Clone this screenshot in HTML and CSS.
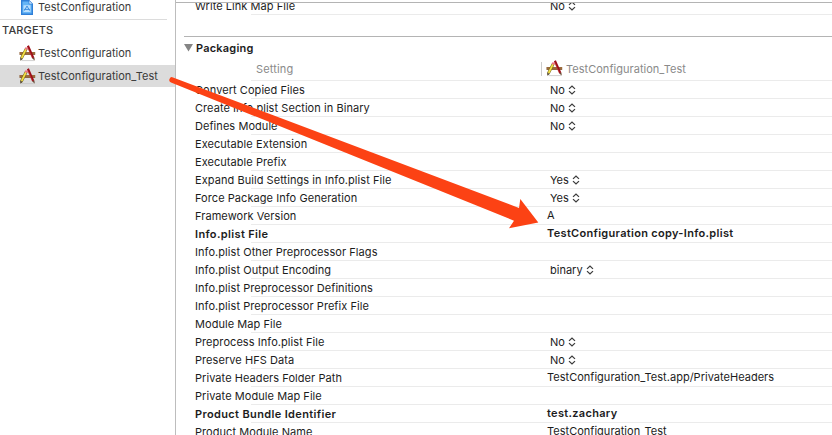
FILE: index.html
```html
<!DOCTYPE html>
<html lang="en">
<head>
<meta charset="utf-8">
<title>Build Settings</title>
<link rel="stylesheet" href="styles.css">
</head>
<body>
<svg class="defs" width="0" height="0" aria-hidden="true">
  <symbol id="app" viewBox="0 0 17 17">
    <path d="M2.5 15.6H15" stroke="#c4c4c4" stroke-width=".8"/>
    <path d="M.5 7H16.2V9.9H.5z" fill="#86562d"/>
    <path d="M1 8H16" stroke="#bd8b52" stroke-width=".8"/>
    <path d="M7.3 3.6L2.4 13.4" stroke="#6b5d14" stroke-width="2.8"/>
    <path d="M7.1 4L2.6 13" stroke="#f3df45" stroke-width="1.7"/>
    <path d="M7.8 2.6L6.9 4.5" stroke="#ed7184" stroke-width="2.6"/>
    <path d="M1.2 12.7L3.6 13.9L1.4 15.8z" fill="#4a3c20"/>
    <path d="M8.9.8L14.3 13" stroke="#9b0d18" stroke-width="2.2"/>
    <path d="M8.5 2L13.2 12.7" stroke="#d44b43" stroke-width=".5"/>
    <path d="M13.2 13.3L15.4 12.4L15.8 15.8z" fill="#6b4b35"/>
  </symbol>
  <symbol id="updown" viewBox="0 0 8 10">
    <path d="M1 3.9L4 1L7 3.9M1 6.1L4 9L7 6.1" fill="none" stroke="#3c3c3c" stroke-width="1.25"/>
  </symbol>
</svg>
<div class="window">
  <aside class="sidebar">
    <div class="item project">
      <svg class="doc" width="12" height="15" viewBox="0 0 12 15"><path d="M.7.7H8L11.3 4V14.3H.7z" fill="#65b5f6" stroke="#2f7fd8" stroke-width="1.4"/><path d="M8 .7V4H11.3" fill="#e4f3ff" stroke="#2f7fd8" stroke-width=".7"/><path d="M2.5 5.2H9.5V12H2.5z" fill="#b9dfff"/><path d="M3.4 10.6L6 6L8.6 10.6M3 9.4H9" fill="none" stroke="#3f8fe0" stroke-width="1"/></svg>
      <span>TestConfiguration</span>
    </div>
    <h2 class="heading">TARGETS</h2>
    <div class="item"><svg class="app"><use href="#app"/></svg><span>TestConfiguration</span></div>
    <div class="item selected"><svg class="app"><use href="#app"/></svg><span>TestConfiguration_Test</span></div>
  </aside>
  <main class="settings">
    <div class="row first"><span class="label">Write Link Map File</span><span class="popup">No<svg><use href="#updown"/></svg></span></div>
    <section class="group">
      <h3 class="title"><svg width="9" height="8" viewBox="0 0 9 8"><path d="M0 0H9L4.5 7.5z" fill="#858585"/></svg>Packaging</h3>
      <div class="columns"><span class="setting">Setting</span><span class="target"><svg class="app"><use href="#app"/></svg>TestConfiguration_Test</span></div>
      <div class="row"><span class="label">Convert Copied Files</span><span class="popup">No<svg><use href="#updown"/></svg></span></div>
      <div class="row"><span class="label">Create Info.plist Section in Binary</span><span class="popup">No<svg><use href="#updown"/></svg></span></div>
      <div class="row"><span class="label">Defines Module</span><span class="popup">No<svg><use href="#updown"/></svg></span></div>
      <div class="row"><span class="label">Executable Extension</span></div>
      <div class="row"><span class="label">Executable Prefix</span></div>
      <div class="row"><span class="label">Expand Build Settings in Info.plist File</span><span class="popup">Yes<svg><use href="#updown"/></svg></span></div>
      <div class="row"><span class="label">Force Package Info Generation</span><span class="popup">Yes<svg><use href="#updown"/></svg></span></div>
      <div class="row"><span class="label">Framework Version</span><span class="value">A</span></div>
      <div class="row bold"><span class="label">Info.plist File</span><span class="value">TestConfiguration copy-Info.plist</span></div>
      <div class="row"><span class="label">Info.plist Other Preprocessor Flags</span></div>
      <div class="row"><span class="label">Info.plist Output Encoding</span><span class="popup">binary<svg><use href="#updown"/></svg></span></div>
      <div class="row"><span class="label">Info.plist Preprocessor Definitions</span></div>
      <div class="row"><span class="label">Info.plist Preprocessor Prefix File</span></div>
      <div class="row"><span class="label">Module Map File</span></div>
      <div class="row"><span class="label">Preprocess Info.plist File</span><span class="popup">No<svg><use href="#updown"/></svg></span></div>
      <div class="row"><span class="label">Preserve HFS Data</span><span class="popup">No<svg><use href="#updown"/></svg></span></div>
      <div class="row"><span class="label">Private Headers Folder Path</span><span class="value">TestConfiguration_Test.app/PrivateHeaders</span></div>
      <div class="row"><span class="label">Private Module Map File</span></div>
      <div class="row bold"><span class="label">Product Bundle Identifier</span><span class="value">test.zachary</span></div>
      <div class="row"><span class="label">Product Module Name</span><span class="value">TestConfiguration_Test</span></div>
    </section>
  </main>
  <svg class="arrow" width="832" height="435" viewBox="0 0 832 435"><path d="M173 77.4L519 208L520.3 199L538.3 222.5L509 228.3L514 220.7L171 82.4A2.6 2.6 0 0 1 173 77.4z" fill="#fc4214"/></svg>
</div>
</body>
</html>
```

FILE: styles.css
```css
* { box-sizing: border-box; }
body {
  margin: 0;
  background: #fff;
  color: #1c1c1c;
  font: 11px/18px Inter, "Liberation Sans", sans-serif;
}
.defs { display: block; height: 0; }
.window {
  position: relative;
  display: flex;
  width: 832px;
  height: 435px;
  overflow: hidden;
}
.sidebar {
  flex: none;
  width: 176px;
  border-right: 1px solid #bdbdbd;
  letter-spacing: .03px;
  color: #3a3a3a;
}
.item {
  display: flex;
  align-items: center;
  height: 22px;
  padding-left: 19px;
  margin-bottom: 1px;
}
.item.selected { background: #dcdcdc; }
.app { flex: none; width: 17px; height: 17px; margin-right: 2px; }
.item.project {
  height: 20px;
  width: 167px;
  margin: 0;
  padding: 0 0 5px 21px;
  border-bottom: 1px solid #dcdcdc;
}
.doc { flex: none; margin-right: 5px; }
.heading {
  margin: 0;
  height: 22px;
  padding-left: 2px;
  font-size: 11px;
  font-weight: 500;
  line-height: 21px;
  letter-spacing: .15px;
}
.settings { flex: 1; min-width: 0; }
.row {
  display: flex;
  height: 18px;
  padding-left: 19px;
  background: linear-gradient(#ebebeb, #ebebeb) 75px 100% / 100% 1px no-repeat;
  white-space: nowrap;
}
.row.first {
  height: 13px;
  margin-top: 2px;
  border-top: 1px solid #b4b4b4;
  align-items: flex-end;
  overflow: hidden;
}
.label { flex: none; width: 352px; letter-spacing: .06px; }
.popup { display: flex; align-items: center; height: 18px; padding-left: 3px; }
.popup svg { width: 8px; height: 10px; margin-left: 3px; }
.value { line-height: 16px; letter-spacing: .02px; }
.bold { font-weight: 600; }
.bold .label { letter-spacing: .36px; }
.bold .value { letter-spacing: .31px; }
.group { margin: 21px 0 0 8px; border-top: 1px solid #b4b4b4; }
.group .row { padding-left: 11px; background-position: 67px 100%; }
.title {
  display: flex;
  align-items: center;
  gap: 3px;
  height: 22px;
  margin: 0;
  font-size: 11px;
  font-weight: 600;
  letter-spacing: .2px;
}
.columns {
  display: flex;
  align-items: center;
  height: 22px;
  padding-bottom: 3px;
  color: #8a8a8a;
  background: linear-gradient(#ebebeb, #ebebeb) 67px 100% / 100% 1px no-repeat;
}
.setting { width: 357px; padding-left: 72px; letter-spacing: .15px; }
.target { display: flex; align-items: center; height: 14px; padding-left: 4px; border-left: 1px solid #ccc; letter-spacing: .03px; }
.target .app { margin-right: 3px; }
.arrow { position: absolute; inset: 0; pointer-events: none; }
```
